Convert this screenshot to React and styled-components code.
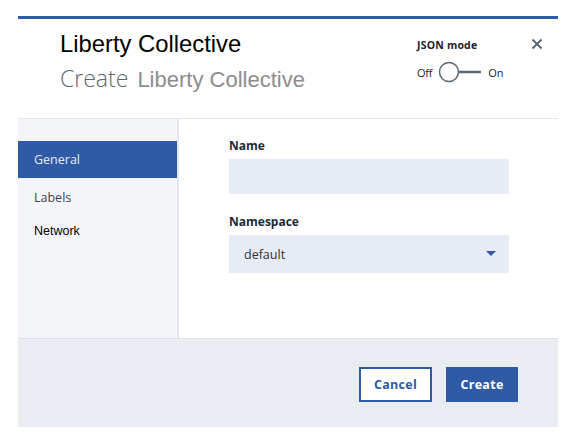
import React from 'react';
import styled, { createGlobalStyle } from 'styled-components';

const Global = createGlobalStyle`
  body {
    margin: 0;
    background: #ffffff;
    font-family: "Open Sans", "Noto Sans", sans-serif;
  }
`;

const Modal = styled.div`
  margin: 16px 0 0 18px;
  width: 540px;
  border-top: 3px solid #2e5aa6;
  background: #ffffff;
`;

const Header = styled.div`
  height: 100px;
  display: flex;
  justify-content: space-between;
  border-bottom: 1px solid #e3e6ea;
  box-sizing: border-box;
  padding: 8px 0 0 42px;
`;

const Titles = styled.div`
  display: flex;
  flex-direction: column;
`;

const Title = styled.div`
  font-family: "Liberation Sans", Arial, sans-serif;
  font-size: 23.8px;
  color: #000;
  line-height: 34px;
`;

const Subtitle = styled.div`
  margin-top: 2px;
  display: flex;
  align-items: baseline;
  gap: 9px;
  line-height: 30px;
`;

const Verb = styled.span`
  font-family: "Open Sans", sans-serif;
  font-weight: 300;
  font-size: 23px;
  color: #5a6872;
`;

const Kind = styled.span`
  font-family: "Liberation Sans", Arial, sans-serif;
  font-size: 22px;
  color: #8d8d8d;
`;

const Controls = styled.div`
  display: flex;
  align-items: flex-start;
  gap: 26px;
  padding-right: 15px;
`;

const JsonMode = styled.div`
  width: 88px;
  padding-top: 11px;
  display: flex;
  flex-direction: column;
  gap: 9px;
`;

const JsonLabel = styled.div`
  font-size: 10.5px;
  font-weight: 700;
  color: #1f2226;
  letter-spacing: 0.2px;
`;

const Toggle = styled.div`
  display: flex;
  align-items: center;
  gap: 6px;
  font-size: 11px;
  letter-spacing: -0.2px;
  color: #1f2226;
`;

const Close = styled.div`
  padding-top: 6px;
  color: #5a6872;
`;

const Body = styled.div`
  display: flex;
  height: 219px;
`;

const Side = styled.div`
  width: 161px;
  background: #f3f5f9;
  border-right: 2px solid #e4e7ec;
  padding-top: 22px;
  box-sizing: border-box;
`;

const NavItem = styled.div`
  height: ${p => p.h || 38}px;
  display: flex;
  align-items: center;
  padding-left: 16px;
  font-family: ${p => p.plain ? '"Liberation Sans", Arial, sans-serif' : '"Open Sans", sans-serif'};
  font-size: 12.5px;
  color: ${p => p.active ? '#e3eaf6' : p.plain ? '#000' : '#3d4450'};
  background: ${p => p.active ? '#2e5aa6' : 'transparent'};
`;

const Content = styled.div`
  flex: 1;
  padding: 18px 0 0 50px;
  display: flex;
  flex-direction: column;
`;

const Label = styled.div`
  font-size: 12px;
  font-weight: 700;
  color: #1f2a36;
  margin-bottom: 5px;
`;

const Field = styled.div`
  width: 280px;
  height: ${p => p.h}px;
  background: #e6ebf5;
  display: flex;
  align-items: center;
  justify-content: space-between;
  padding: 0 13px 0 15px;
  box-sizing: border-box;
  font-size: 12.5px;
  color: #2a3240;
  margin-bottom: ${p => p.mb || 0}px;
`;

const Footer = styled.div`
  height: 89px;
  background: #e9edf2;
  border-top: 1px solid #dde1e7;
  box-sizing: border-box;
  display: flex;
  justify-content: flex-end;
  align-items: flex-start;
  gap: 14px;
  padding: 28px 40px 0 0;
`;

const Button = styled.div`
  height: 35px;
  box-sizing: border-box;
  display: flex;
  align-items: center;
  justify-content: center;
  width: ${p => p.w}px;
  font-size: 12.5px;
  font-weight: 700;
  letter-spacing: 0.3px;
  border: 2px solid #2e5aa6;
  background: ${p => p.primary ? '#2e5aa6' : '#ffffff'};
  color: ${p => p.primary ? '#ffffff' : '#2e5aa6'};
`;

export default function App() {
  return (
    <>
      <Global />
      <Modal>
        <Header>
          <Titles>
            <Title>Liberty Collective</Title>
            <Subtitle>
              <Verb>Create</Verb>
              <Kind>Liberty Collective</Kind>
            </Subtitle>
          </Titles>
          <Controls>
            <JsonMode>
              <JsonLabel>JSON mode</JsonLabel>
              <Toggle>
                <span>Off</span>
                <svg width="44" height="22" viewBox="0 0 44 22">
                  <line x1="20" y1="11" x2="43" y2="11" stroke="#5a6872" strokeWidth="2.5" />
                  <circle cx="11" cy="11" r="9.5" fill="#fff" stroke="#5a6872" strokeWidth="1.5" />
                </svg>
                <span>On</span>
              </Toggle>
            </JsonMode>
            <Close>
              <svg width="12" height="12" viewBox="0 0 12 12">
                <path d="M1.5 1.5 L10.5 10.5 M10.5 1.5 L1.5 10.5" stroke="#5a6872" strokeWidth="2" />
              </svg>
            </Close>
          </Controls>
        </Header>
        <Body>
          <Side>
            <NavItem active h={37}>General</NavItem>
            <NavItem>Labels</NavItem>
            <NavItem plain h={30}>Network</NavItem>
          </Side>
          <Content>
            <Label>Name</Label>
            <Field h={35} mb={19} />
            <Label>Namespace</Label>
            <Field h={38}>
              <span>default</span>
              <svg width="10" height="6" viewBox="0 0 10 6">
                <path d="M0 0 H10 L5 5 Z" fill="#2e5aa6" />
              </svg>
            </Field>
          </Content>
        </Body>
        <Footer>
          <Button w={73}>Cancel</Button>
          <Button primary w={72}>Create</Button>
        </Footer>
      </Modal>
    </>
  );
}
